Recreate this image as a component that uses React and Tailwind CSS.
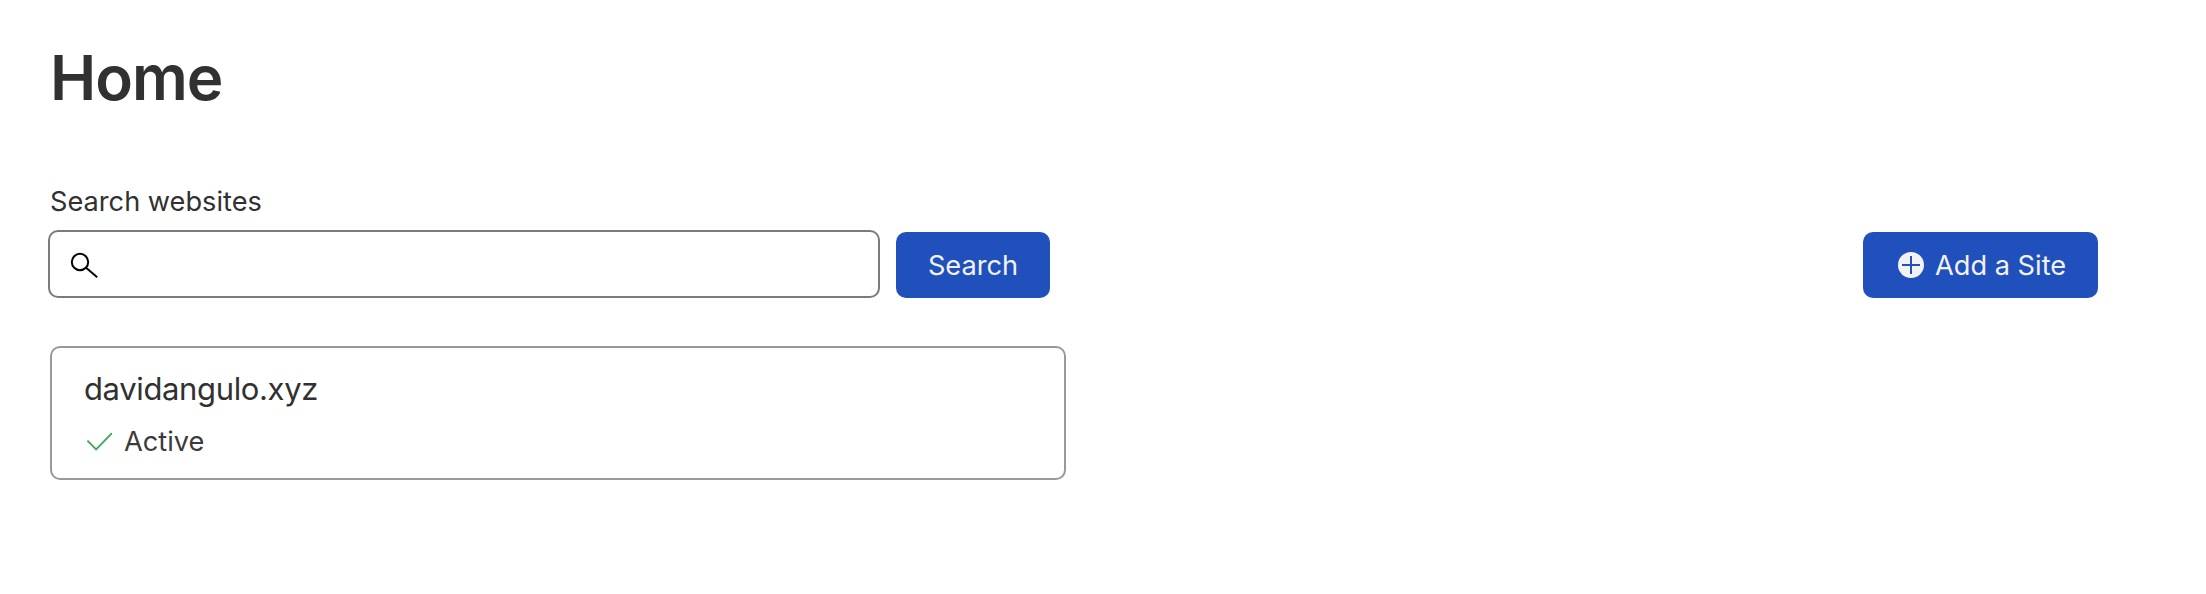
function SearchIcon() {
  return (
    <svg className="h-[30px] w-[30px] shrink-0" viewBox="0 0 30 30" fill="none" stroke="#000" strokeWidth="2">
      <circle cx="11" cy="13" r="8.2" />
      <path d="M16.8 18.6 L28.2 28.2" />
    </svg>
  );
}

function PlusCircle() {
  return (
    <svg className="h-[26px] w-[26px] shrink-0" viewBox="0 0 26 26">
      <circle cx="13" cy="13" r="13" fill="#f2f2f2" />
      <path d="M4 13H22M13 4V22" stroke="#2050bb" strokeWidth="2" />
    </svg>
  );
}

function CheckIcon() {
  return (
    <svg className="h-[24px] w-[28px] shrink-0" viewBox="0 0 28 24" fill="none" stroke="#46a85a" strokeWidth="1.9">
      <path d="M3.4 11.6 L12.1 20.4 L28 4.2" />
    </svg>
  );
}

export default function App() {
  return (
    <main className="h-[594px] w-full bg-white pl-[50px] pt-[40px] pr-[108px] font-['Inter',sans-serif] text-[#313131]">
      <h1 className="h-[76px] text-[62px] leading-[76px] font-semibold tracking-[-1px]">Home</h1>
      <label htmlFor="q" className="mt-[65px] block h-[42px] text-[27.2px] leading-[42px]">
        Search websites
      </label>
      <div className="mt-[7px] -ml-[2px] flex h-[68px] items-end">
        <div className="flex h-[68px] w-[832px] items-center rounded-[10px] border-2 border-[#7b7b7b] pl-[19px]">
          <SearchIcon />
          <input id="q" className="ml-3 h-full flex-1 bg-transparent text-[27.2px] outline-none" />
        </div>
        <button className="ml-[16px] flex h-[66px] w-[154px] items-center justify-center rounded-[10px] bg-[#2050bb] pt-[2px] text-[27.2px] leading-[42px] text-[#f2f2f2]">
          Search
        </button>
        <button className="ml-auto flex h-[66px] w-[235px] items-center rounded-[10px] bg-[#2050bb] pl-[35px] text-[27.2px] leading-[42px] text-[#f2f2f2]">
          <PlusCircle />
          <span className="ml-[11px] pt-[2px] whitespace-nowrap">Add a Site</span>
        </button>
      </div>
      <section className="mt-[48px] h-[134px] w-[1016px] rounded-[10px] border-2 border-[#999999] pl-[32px] pt-[17px]">
        <h2 className="h-[48px] text-[31px] leading-[48px] tracking-[-0.36px]">davidangulo.xyz</h2>
        <div className="mt-[7px] flex h-[42px] items-center text-[27.2px] leading-[42px] text-[#3b3b3b]">
          <CheckIcon />
          <span className="ml-[12px] pt-[2px]">Active</span>
        </div>
      </section>
    </main>
  );
}
